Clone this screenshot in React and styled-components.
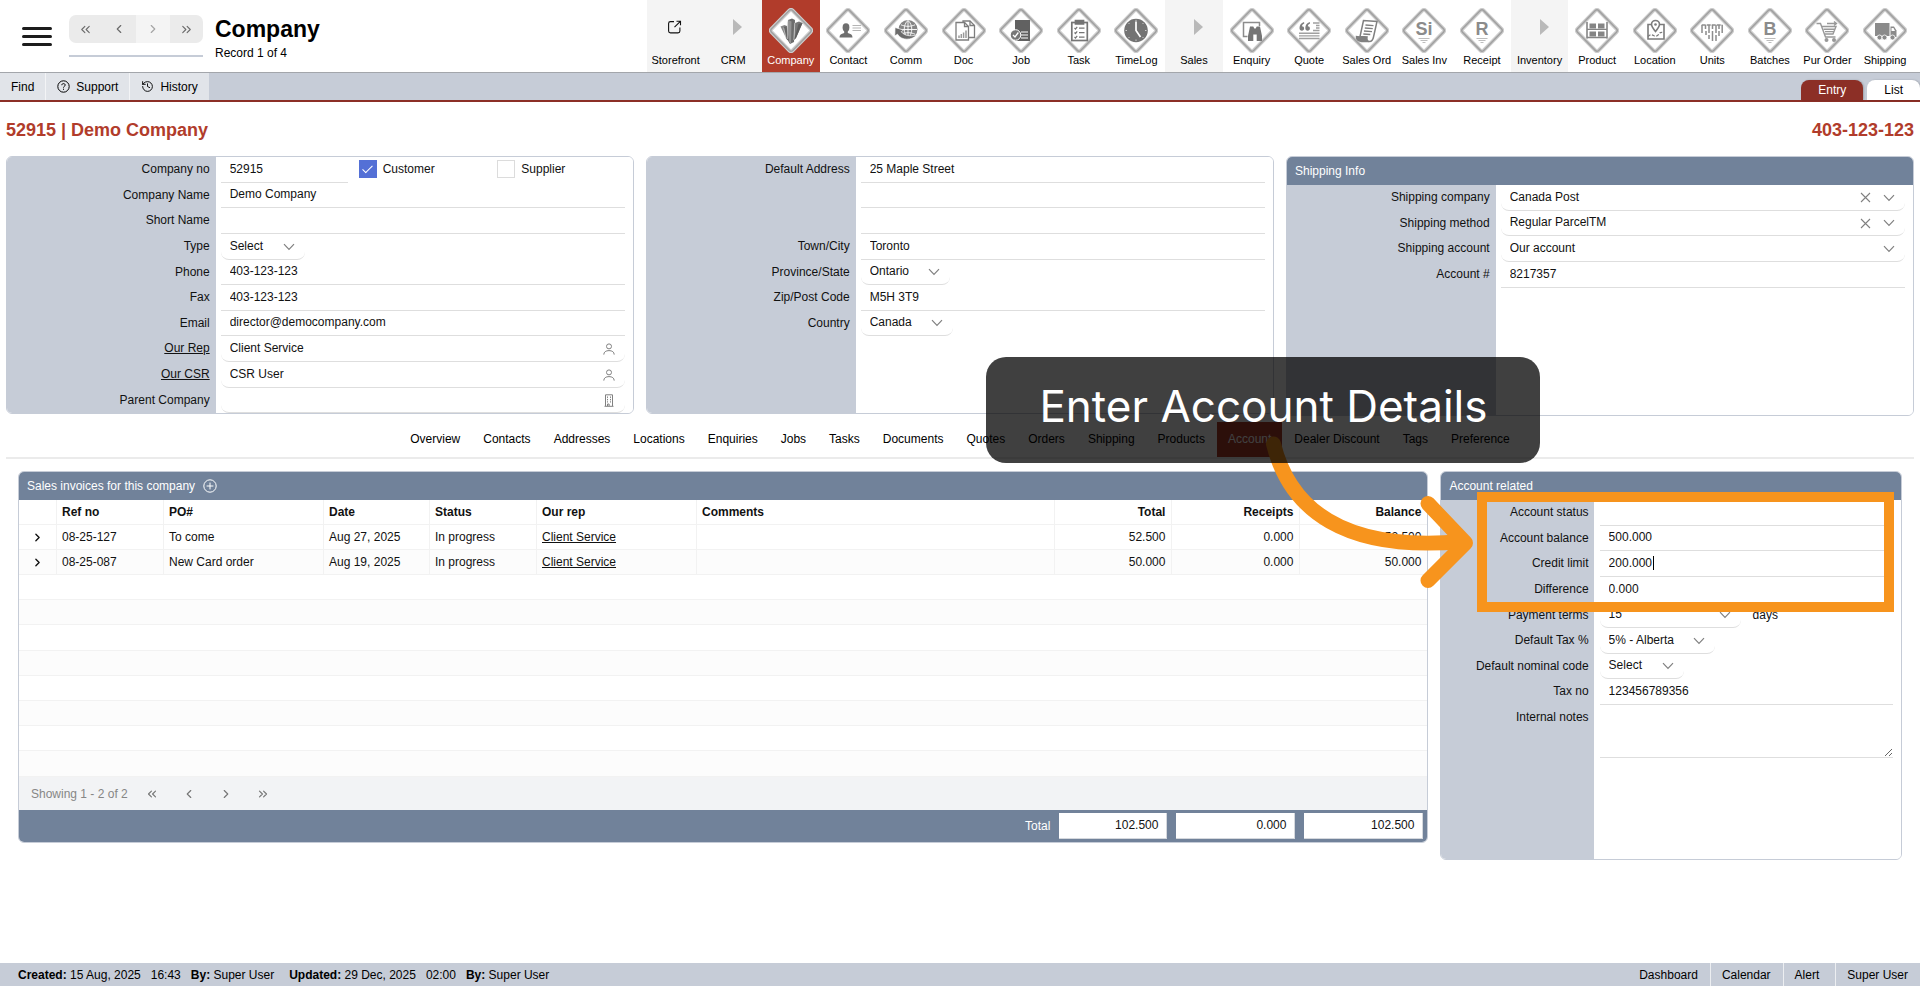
import React, { Fragment } from "react";
import styled, { createGlobalStyle, css } from "styled-components";
import { ChevronLeft, ChevronRight, ChevronsLeft, ChevronsRight, History } from "lucide-react";

const color = {
  mist: "#c6ccd7",
  slate: "#71829a",
  brick: "#b13c2b",
  brickDark: "#8c2f26",
  line: "#dedede",
  faint: "#f2f2f2",
  icon: "#808080",
  orange: "#f7941d",
};

const GlobalStyle = createGlobalStyle`
  *, *::before, *::after { box-sizing: border-box; }
  body { margin: 0; background: #fff; }
  body, button, input, select, textarea {
    font-family: "Liberation Sans", Arial, Helvetica, sans-serif;
    font-size: 12px;
    line-height: 16px;
    color: #111;
  }
  button { border: 0; padding: 0; background: none; cursor: pointer; }
  a { color: inherit; }
`;

const Page = styled.div`
  min-height: 100vh;
  display: flex;
  flex-direction: column;
`;

/* ---------- Header ---------- */

const Header = styled.header`
  display: flex;
  height: 73px;
  border-bottom: 1px solid #a3a6ab;
`;

const HeaderLeft = styled.div`
  flex: 1;
  min-width: 0;
  display: flex;
  align-items: flex-start;
  padding-left: 22px;
`;

const MenuButton = styled.button`
  display: grid;
  gap: 5px;
  width: 30px;
  margin-top: 27px;

  span {
    height: 3px;
    border-radius: 2px;
    background: #1c1c1c;
  }
`;

const RecordNav = styled.div`
  width: 134px;
  margin: 15px 0 0 17px;
  padding-bottom: 12px;
  border-bottom: 2px solid ${color.mist};
`;

const RecordButtons = styled.div`
  display: flex;
  border-radius: 7px;
  overflow: hidden;
`;

const RecordButton = styled.button`
  flex: 1;
  height: 28px;
  display: grid;
  place-items: center;
  background: ${(p) => (p.disabled ? "#f4f4f4" : "#ebebeb")};
  color: ${(p) => (p.disabled ? "#a5a5a5" : "#6b6b6b")};
`;

const TitleBlock = styled.div`
  margin: 15px 0 0 12px;
`;

const PageTitle = styled.h1`
  margin: 0;
  font-size: 23px;
  line-height: 28px;
  color: #000;
`;

const RecordCount = styled.p`
  margin: 2px 0 0;
  color: #000;
`;

const Modules = styled.nav`
  display: flex;
  width: 66%;
  margin-right: 6px;
`;

const ModuleLink = styled.a`
  flex: 1 1 0;
  min-width: 0;
  display: flex;
  flex-direction: column;
  align-items: center;
  padding-top: 8px;
  font-size: 11px;
  line-height: 14px;
  white-space: nowrap;
  text-decoration: none;
  color: ${(p) => (p.$active ? "#fff" : "#000")};
  background: ${(p) => (p.$active ? color.brick : p.$section ? "#f4f4f4" : "transparent")};

  svg {
    flex: none;
  }
`;

/* ---------- Action bar ---------- */

const ActionBar = styled.div`
  display: flex;
  justify-content: space-between;
  height: 29px;
  background: ${color.mist};
  border-bottom: 2px solid ${color.brickDark};
`;

const Actions = styled.div`
  display: flex;
`;

const ActionButton = styled.button`
  display: flex;
  align-items: center;
  gap: 6px;
  padding: 0 11px;
  background: #e1e4e9;
  color: #000;

  & + & {
    border-left: 1px solid #f3f4f6;
  }
`;

const ViewTabs = styled.div`
  display: flex;
  align-items: flex-end;
  gap: 4px;
`;

const ViewTab = styled.button`
  height: 20px;
  padding: 0 17px;
  border-radius: 8px 8px 0 0;
  background: ${(p) => (p.$active ? color.brickDark : "#fff")};
  color: ${(p) => (p.$active ? "#fff" : "#000")};
  box-shadow: 1px 0 2px rgba(0, 0, 0, 0.2);
`;

/* ---------- Content ---------- */

const Main = styled.main`
  flex: 1;
  padding: 0 6px 24px;
`;

const RecordHeading = styled.div`
  display: flex;
  justify-content: space-between;
  padding: 18px 0 16px;
  font-size: 18px;
  line-height: 20px;
  font-weight: bold;
  color: ${color.brick};

  h2 {
    margin: 0;
    font-size: inherit;
  }
`;

const PanelRow = styled.div`
  display: grid;
  grid-template-columns: repeat(3, minmax(0, 1fr));
  align-items: start;
  gap: 12px;
`;

const Panel = styled.section`
  display: flex;
  flex-direction: column;
  min-height: ${(p) => (p.$min ? `${p.$min}px` : "0")};
  border: 1px solid ${color.mist};
  border-radius: 6px;
  overflow: hidden;
`;

const PanelHeader = styled.h3`
  display: flex;
  align-items: center;
  gap: 8px;
  margin: 0;
  height: 28px;
  padding: 0 8px 1px;
  background: ${color.slate};
  color: #fff;
  font-size: 12px;
  font-weight: normal;
`;

const Form = styled.div`
  flex: 1;
  display: grid;
  grid-template-columns: minmax(0, 1fr) minmax(0, 2fr);
  grid-auto-rows: 26px 25px 26px 26px 25px;
  align-content: start;
  background: linear-gradient(to right, ${color.mist} 33.33%, #fff 33.33%);
`;

const FieldLabel = styled.label`
  align-self: start;
  padding: 4px 6px 0 0;
  text-align: right;
`;

const FieldCell = styled.div`
  display: flex;
  align-items: stretch;
  gap: 12px;
  padding: 0 8px 0 5px;
  ${(p) =>
    p.$rows &&
    css`
      grid-row: span ${p.$rows};
      align-items: flex-start;
    `}
`;

const underline = css`
  border: 0;
  border-bottom: 1px solid ${color.line};
  border-radius: 0;
  background: transparent;
  outline: 0;
`;

const TextInput = styled.input`
  ${underline}
  width: 100%;
  min-width: 0;
  padding: 0 9px 2px;
`;

const NotesInput = styled.textarea`
  ${underline}
  display: block;
  width: 100%;
  height: 53px;
  padding: 4px 9px;
  resize: vertical;
`;

const Stack = styled.div`
  display: grid;
  width: ${(p) => (p.$width ? `${p.$width}px` : "100%")};

  > * {
    grid-area: 1 / 1;
  }
`;

const Select = styled.select`
  ${underline}
  appearance: none;
  width: 100%;
  padding: 0 9px 2px;
  border-radius: 0 0 8px 8px;
`;

const LookupInput = styled(TextInput)`
  border-radius: 0 0 8px 8px;
`;

const Adornment = styled.div`
  justify-self: end;
  display: flex;
  align-items: center;
  gap: 12px;
  padding: 0 10px 1px 0;
  color: ${color.icon};
  pointer-events: none;

  svg {
    display: block;
  }
  button {
    pointer-events: auto;
    color: inherit;
  }
`;

const Caret = styled.span`
  justify-self: start;
  align-self: center;
  width: 1px;
  height: 14px;
  margin: 0 0 2px 53px;
  background: #000;
`;

const Unit = styled.span`
  padding-top: 4px;
`;

const CompanyNoCell = styled.div`
  display: grid;
  grid-template-columns: 127px 1fr 1fr;
  gap: 11px;
  padding: 0 8px 0 5px;
`;

const CheckLabel = styled.label`
  display: flex;
  align-items: center;
  gap: 6px;
  padding-bottom: 2px;
`;

const Checkbox = styled.input`
  appearance: none;
  display: grid;
  place-items: center;
  width: 18px;
  height: 18px;
  margin: 0;
  border: 1px solid #dcdcdc;

  &:checked {
    border-color: #5470d6;
    background: #5470d6;
  }
  &:checked::after {
    content: "";
    width: 5px;
    height: 10px;
    margin-bottom: 3px;
    border: solid #fff;
    border-width: 0 1px 1px 0;
    transform: rotate(45deg);
  }
`;

const SubTabs = styled.nav`
  display: flex;
  justify-content: center;
  gap: 1px;
  margin-top: 6px;
  border-bottom: 2px solid #ebebeb;
`;

const SubTab = styled.a`
  padding: 9px 11px 10px;
  text-decoration: none;
  color: ${(p) => (p.$active ? "#fff" : "#000")};
  background: ${(p) => (p.$active ? color.brick : "transparent")};
`;

const DetailRow = styled.div`
  display: grid;
  grid-template-columns: minmax(0, 1fr) 24.5%;
  align-items: start;
  gap: 12px;
  padding: 12px 12px 0;
`;

/* ---------- Invoice table ---------- */

const InvoiceTable = styled.table`
  width: 100%;
  table-layout: fixed;
  border-collapse: separate;
  border-spacing: 0;

  th,
  td {
    height: 25px;
    padding: 0 6px 0 5px;
    border-bottom: 1px solid ${color.faint};
    text-align: left;
    white-space: nowrap;
    line-height: 14px;
  }
  th + th,
  td + td {
    border-left: 1px solid ${color.faint};
  }
  tbody tr:nth-child(even) {
    background: #fcfcfc;
  }
  tbody tr:nth-child(5n) td {
    height: 26px;
  }
  .num {
    text-align: right;
  }
`;

const ExpandButton = styled.button`
  display: grid;
  margin: 0 auto;
  color: #111;
`;

const Pager = styled.div`
  display: flex;
  align-items: center;
  gap: 17px;
  height: 33px;
  padding: 0 12px;
  background: #f2f3f5;
  color: #868686;
`;

const PagerButtons = styled.div`
  display: flex;
  gap: 23px;

  button {
    display: grid;
    color: #777;
  }
`;

const TotalsBar = styled.div`
  display: flex;
  align-items: center;
  justify-content: flex-end;
  gap: 9px;
  height: 32px;
  padding-right: 4px;
  background: ${color.slate};
  color: #fff;
`;

const TotalBox = styled.output`
  width: ${(p) => p.$width}px;
  height: 26px;
  padding: 4px 8px;
  background: #fff;
  color: #111;
  text-align: right;
  border: solid #d5d8dd;
  border-width: 0 1px 1px 0;
`;

/* ---------- Walkthrough annotations ---------- */

const Annotated = styled.div`
  position: relative;
`;

const Highlight = styled.div`
  position: absolute;
  z-index: 1;
  top: 21px;
  left: 37px;
  right: 8px;
  height: 120px;
  border: 10px solid ${color.orange};
  pointer-events: none;
`;

const Arrow = styled.svg`
  position: absolute;
  z-index: 1;
  top: -41px;
  left: -180px;
  pointer-events: none;
`;

const Callout = styled.div`
  position: absolute;
  z-index: 2;
  top: -114px;
  left: -454px;
  width: 554px;
  height: 106px;
  padding-bottom: 8px;
  display: grid;
  place-items: center;
  border-radius: 20px;
  background: rgba(0, 0, 0, 0.75);
  color: #fff;
  font-family: Inter, "Liberation Sans", sans-serif;
  font-size: 44px;
  line-height: 54px;
  white-space: nowrap;
  pointer-events: none;
`;

/* ---------- Footer ---------- */

const Footer = styled.footer`
  display: flex;
  justify-content: space-between;
  height: 23px;
  line-height: 24px;
  padding-left: 18px;
  background: ${color.mist};
  color: #000;
`;

const AuditTrail = styled.div`
  display: flex;
  gap: 10px;

  span:nth-child(4) {
    margin-left: 5px;
  }
`;

const FooterLinks = styled.nav`
  display: flex;

  a {
    padding: 0 12px 0 11px;
    text-decoration: none;
  }
  a:nth-child(3) {
    padding-right: 16px;
  }
  a + a {
    border-left: 1px solid #eceef1;
  }
`;

/* ---------- Small icons ---------- */

const DownIcon = () => (
  <svg width="12" height="8" viewBox="0 0 12 8" fill="none" stroke="currentColor" strokeWidth="1.2">
    <path d="M1 1.2l5 5.2 5-5.2" />
  </svg>
);

const ClearIcon = () => (
  <svg width="11" height="11" viewBox="0 0 11 11" fill="none" stroke="currentColor" strokeWidth="1.1">
    <path d="M1 1l9 9M10 1l-9 9" />
  </svg>
);

const PersonIcon = () => (
  <svg width="12" height="12" viewBox="0 0 12 12" fill="none" stroke="currentColor" strokeWidth="1">
    <circle cx="6" cy="3.4" r="2.5" />
    <path d="M0.8 11.6c0-2.6 2-4 5.2-4s5.2 1.4 5.2 4" />
  </svg>
);

const BuildingIcon = () => (
  <svg width="12" height="13" viewBox="0 0 12 13" fill="none" stroke="currentColor" strokeWidth="1">
    <path d="M2.500 12V.8h7V12M1.500 12.300h9" />
    <path d="M4.500 2.500v6M7.500 2.500v6" strokeDasharray="1.4 1" />
    <path d="M4.500 12v-2h1.600v2" />
  </svg>
);

const PlusCircleIcon = () => (
  <svg width="14" height="14" viewBox="0 0 14 14" fill="none" stroke="#fff" strokeWidth="1">
    <circle cx="7" cy="7" r="6.2" />
    <path d="M7 3.6v6.8M3.6 7h6.8" />
  </svg>
);

const HelpIcon = () => (
  <svg width="13" height="13" viewBox="0 0 13 13" fill="none" stroke="currentColor" strokeWidth="1">
    <circle cx="6.5" cy="6.5" r="5.7" />
    <path d="M4.8 5.2c0-1 .7-1.600 1.700-1.600s1.700.6 1.700 1.500c0 1.200-1.700 1.200-1.700 2.500" />
    <path d="M6.500 8.700v1.100" />
  </svg>
);

/* ---------- Module glyphs, drawn inside a 44 x 45 diamond ---------- */

const glyphText = {
  fontFamily: "Liberation Sans, Arial, sans-serif",
  fontWeight: "bold",
  textAnchor: "middle",
  fill: "#8b8b8b",
};

const StackLines = () => (
  <path d="M16.5 30.5h11M18.5 32.5h7M20.5 34.5h3" stroke="#bdbdbd" strokeWidth="1.2" />
);

const glyphs = {
  company: (
    <g>
      <path d="M19 12l4-1.500 3 1.500-1 22-4 2-3-5z" fill="#6c6c6c" />
      <path d="M19 12l3.500 1.500L22 36l-4-5z" fill="#939393" />
      <path d="M11.500 18.500l4-1.500 2.500 1 2 15-2.500-2z" fill="#898989" />
      <path d="M14.500 19l3-1 2.500 15-2.500-2z" fill="#666" />
      <path d="M26 15l4-1.500 3.500 1.500-6.500 15-2 2z" fill="#777" />
      <path d="M29.500 16l4-1-6.500 15-2 2z" fill="#5d5d5d" />
      <path d="M18.600 14v17M25.800 15l-1 17M14.600 19.500l2.500 11" stroke="#ddd" strokeWidth=".6" />
    </g>
  ),
  contact: (
    <g fill="#6f6f6f">
      <ellipse cx="20" cy="19.500" rx="3.400" ry="4.200" />
      <path d="M13.500 29.500c0-3 1.500-3.800 4.700-4.600v-2h3.600v2c3.200.8 4.700 1.600 4.700 4.600z" />
      <path d="M26.500 17.500H35M26.500 20h8.500M26.500 22.500H35" stroke="#b5b5b5" />
    </g>
  ),
  comm: (
    <g>
      <circle cx="24" cy="21.500" r="9.500" fill="#858585" />
      <path
        d="M24 12.500v17M15 21.500h18M17 16.800c4 2 10 2 14 0M17 26.200c4-2 10-2 14 0M24 12.500c-5 4-5 13 0 18M24 12.500c5 4 5 13 0 18"
        fill="none"
        stroke="#fff"
        strokeWidth=".9"
      />
      <path d="M11 19.500l8.500 2.500-2.300 1.700c3 4 9 5 15.300 3.300-4.500 5.500-15 6-19-.8L10.800 28z" fill="#6b6b6b" stroke="#fff" strokeWidth=".7" />
    </g>
  ),
  doc: (
    <g fill="#fff" stroke="#7d7d7d" strokeWidth="1.300">
      <path d="M21 13h7l4.500 4.500V29.500H21z" />
      <path d="M14 14.500h8.500l4 4v13.500H14z" />
      <path d="M22.500 14.500v4h4M28 13v4.500h4.500" fill="none" />
      <path d="M17 30v-2.500M19.300 30v-4M21.600 30v-5.500M24 30v-7.500" stroke="#999" strokeWidth="1.500" />
    </g>
  ),
  job: (
    <g>
      <path d="M16 12h15v21H16z" fill="#616161" />
      <path d="M22 24h7M22 27h7M22 30h7" stroke="#fff" strokeWidth="1.200" />
      <circle cx="16.500" cy="27" r="5.300" fill="#777" stroke="#fff" />
      <path d="M14 27l2 2 3.300-4.500" fill="none" stroke="#fff" strokeWidth="1.300" />
    </g>
  ),
  task: (
    <g fill="none" stroke="#757575" strokeWidth="1.700">
      <rect x="14.800" y="14.500" width="15.500" height="18" />
      <path d="M18.500 12.500h8v3.300h-8z" fill="#757575" />
      <path d="M17.500 20l1 1 1.700-2.200M17.500 24.500l1 1 1.700-2.200M17.500 29l1 1 1.700-2.200M22 20.200h5.500M22 24.700h5.500M22 29.200h5.500" strokeWidth="1.200" />
    </g>
  ),
  timelog: (
    <g>
      <circle cx="22" cy="22.500" r="11.800" fill="#737373" />
      <path d="M22 13.500v9l4.500 6.500" fill="none" stroke="#fff" strokeWidth="1.700" />
      <path d="M22 11.800v1.500M22 31.500V33M11.500 22.500H13M31 22.500h1.500M14.500 15l1 1M28.500 29l1 1M29.500 15l-1 1M15.500 29l-1 1" stroke="#ccc" />
    </g>
  ),
  enquiry: (
    <g>
      <path d="M17.500 28.500h-4V14.500h16V18" fill="none" stroke="#8c8c8c" strokeWidth="1.500" />
      <path d="M20 18.500h3.300l1 2h1.400l1-2H30l2 9.500v5h-5.300v-6.500h-3.400V33H18v-5z" fill="#757575" />
    </g>
  ),
  quote: (
    <g fill="#7d7d7d">
      <path d="M17 14c-3 1-4.500 3.200-4.500 6 0 1.800 1 2.700 2.400 2.700 1.300 0 2.200-.9 2.200-2.200S16.300 18.300 15 18.300c.2-1.400 1-2.200 2.300-2.800zM22.800 14c-3 1-4.500 3.200-4.500 6 0 1.800 1 2.700 2.400 2.700 1.300 0 2.200-.9 2.200-2.200s-.8-2.200-2.100-2.200c.2-1.400 1-2.200 2.300-2.800z" />
      <path d="M26 15h6.500M29 17.500h3.500M29 20h3.500M26 22.500h6.500M12 25.300h20.500M12 27.900h20.500M12 30.500h20.500" stroke="#a0a0a0" strokeWidth="1.400" />
    </g>
  ),
  order: (
    <g fill="none" stroke="#808080" strokeWidth="1.500">
      <path d="M15 29l-3.500-.4c0 3 1.600 4.600 5 4.800l7.500.2c-2.300-1-2.500-2.700-2-4.600z" fill="#808080" />
      <path d="M18.500 12.500l-3.500 16 7 .5c-.5 3 .5 4.500 2.500 4.500 2.500 0 3.500-2 4-4.500l3.500-15.500z" fill="#fff" />
      <path d="M20.500 17l8 .6M19.800 20l8 .6M19 23l8 .6M18.300 26l7 .5" strokeWidth="1.300" />
    </g>
  ),
  si: (
    <g>
      <text x="22" y="27" fontSize="18" {...glyphText}>Si</text>
      <StackLines />
    </g>
  ),
  receipt: (
    <g>
      <text x="22" y="27" fontSize="18" {...glyphText}>R</text>
      <StackLines />
    </g>
  ),
  batches: (
    <g>
      <text x="22" y="27" fontSize="18" {...glyphText}>B</text>
      <StackLines />
    </g>
  ),
  product: (
    <g fill="#858585">
      <path d="M12 14v16.500M32 14v16.500" stroke="#858585" strokeWidth="1.600" />
      <path d="M12 21.300h20M12 29.500h20" stroke="#858585" strokeWidth="1.300" />
      <path d="M14.500 15.500h6.500v5h-6.500zM23 15.500h6.500v5H23zM14.500 23.500h6.500v5h-6.500zM23 23.500h6.500v5H23z" />
    </g>
  ),
  location: (
    <g fill="none" stroke="#7b7b7b" strokeWidth="1.600">
      <path d="M18 16.500h-3v14.500h16V16.500h-4" />
      <path d="M22.500 23.500c-2.700-3.300-4-5.200-4-7a4 4 0 0 1 8 0c0 1.800-1.300 3.700-4 7z" />
      <circle cx="22.500" cy="16.500" r="1.300" fill="#7b7b7b" stroke="none" />
      <path d="M15 28.500c2-2.500 4-2 5.500-1s4 1 5-1 2.500-2.500 5-2" strokeDasharray="3 1.500" strokeWidth="1.300" />
    </g>
  ),
  units: (
    <g stroke="#8c8c8c" strokeWidth="1.500">
      <path d="M11.700 17h20.600" strokeDasharray="4 1" />
      <path d="M12 17v8M15.500 17v4M19 17v8M22.500 17v4M26 17v8M29 17v4M32.200 17v8M16 23v4M19 27v4M22.500 23v10M26 27v6M29 23v5" />
    </g>
  ),
  cart: (
    <g fill="none" stroke="#999" strokeWidth="1.400">
      <path d="M11.500 15.500h4l5 13.500h10" />
      <path d="M17 18.500h14l-3 7.500H20M18.500 21.200h11.500M20 23.600h9" />
      <path d="M22 15.500h9M29 13.500l2.500 2-2.500 2" />
      <circle cx="21.500" cy="32" r="1.300" fill="#999" />
      <circle cx="29" cy="32" r="1.300" fill="#999" />
    </g>
  ),
  truck: (
    <g fill="#8b8b8b">
      <path d="M12 15h14.500v13H12z" />
      <path d="M27.500 18.500h3.500l2.500 4V29h-6z" />
      <path d="M28.500 20h2l1.500 3h-3.500z" fill="#fff" />
      <circle cx="16.500" cy="29.500" r="2.500" stroke="#fff" strokeWidth=".8" />
      <circle cx="21.500" cy="29.500" r="2.500" stroke="#fff" strokeWidth=".8" />
      <circle cx="29.500" cy="29.500" r="2.500" stroke="#fff" strokeWidth=".8" />
    </g>
  ),
};

const DIAMOND = "M20.300 2.600q1.700-1.700 3.400 0L41.500 20.800q1.500 1.700 0 3.400L23.700 42.400q-1.700 1.700-3.400 0L2.500 24.200q-1.500-1.700 0-3.400z";

const ModuleIcon = ({ kind }) => {
  if (kind === "external") {
    return (
      <svg width="44" height="45" viewBox="0 0 44 45" fill="none" stroke="#111" strokeWidth="1.100">
        <path d="M20 13.600h-3.500q-1.900 0-1.900 1.900v7.500q0 1.900 1.900 1.900h7.500q1.900 0 1.900-1.900V19.500" />
        <path d="M20.500 19.200l5.600-5.600M22.500 13.200h4v4" />
      </svg>
    );
  }
  if (kind === "section") {
    return (
      <svg width="44" height="45" viewBox="0 0 44 45">
        <path d="M22 11l9 8-9 8z" fill="#b9b9b9" />
      </svg>
    );
  }
  return (
    <svg width="44" height="45" viewBox="0 0 44 45">
      <path d={DIAMOND} fill="#fff" stroke="#cdcdcd" strokeWidth="3.800" />
      <path d={DIAMOND} fill="none" stroke="#a0a0a0" strokeWidth="1.500" />
      {glyphs[kind]}
    </svg>
  );
};

/* ---------- Data ---------- */

const modules = [
  ["Storefront", "external"],
  ["CRM", "section"],
  ["Company", "company"],
  ["Contact", "contact"],
  ["Comm", "comm"],
  ["Doc", "doc"],
  ["Job", "job"],
  ["Task", "task"],
  ["TimeLog", "timelog"],
  ["Sales", "section"],
  ["Enquiry", "enquiry"],
  ["Quote", "quote"],
  ["Sales Ord", "order"],
  ["Sales Inv", "si"],
  ["Receipt", "receipt"],
  ["Inventory", "section"],
  ["Product", "product"],
  ["Location", "location"],
  ["Units", "units"],
  ["Batches", "batches"],
  ["Pur Order", "cart"],
  ["Shipping", "truck"],
];

const subTabs = [
  "Overview", "Contacts", "Addresses", "Locations", "Enquiries", "Jobs", "Tasks", "Documents",
  "Quotes", "Orders", "Shipping", "Products", "Account", "Dealer Discount", "Tags", "Preference",
];

const addressFields = [
  { id: "address1", label: "Default Address", value: "25 Maple Street" },
  { id: "address2", hiddenLabel: "Address line 2", value: "" },
  { id: "address3", hiddenLabel: "Address line 3", value: "" },
  { id: "town", label: "Town/City", value: "Toronto" },
  { id: "province", label: "Province/State", value: "Ontario", kind: "select", width: 89 },
  { id: "zip", label: "Zip/Post Code", value: "M5H 3T9" },
  { id: "country", label: "Country", value: "Canada", kind: "select", width: 92 },
];

const companyFields = [
  { id: "name", label: "Company Name", value: "Demo Company" },
  { id: "short", label: "Short Name", value: "" },
  { id: "type", label: "Type", value: "Select", kind: "select", width: 84 },
  { id: "phone", label: "Phone", value: "403-123-123" },
  { id: "fax", label: "Fax", value: "403-123-123" },
  { id: "email", label: "Email", value: "director@democompany.com" },
  { id: "rep", label: "Our Rep", value: "Client Service", kind: "lookup", icon: <PersonIcon />, link: true },
  { id: "csr", label: "Our CSR", value: "CSR User", kind: "lookup", icon: <PersonIcon />, link: true },
  { id: "parent", label: "Parent Company", value: "", kind: "lookup", icon: <BuildingIcon /> },
];

const shippingFields = [
  { id: "ship-company", label: "Shipping company", value: "Canada Post", kind: "select", clearable: true },
  { id: "ship-method", label: "Shipping method", value: "Regular ParcelTM", kind: "select", clearable: true },
  { id: "ship-account", label: "Shipping account", value: "Our account", kind: "select" },
  { id: "account-no", label: "Account #", value: "8217357" },
];

const accountFields = [
  { id: "acc-status", label: "Account status", value: "" },
  { id: "acc-balance", label: "Account balance", value: "500.000" },
  { id: "credit", label: "Credit limit", value: "200.000", kind: "editing" },
  { id: "difference", label: "Difference", value: "0.000" },
  { id: "terms", label: "Payment terms", value: "15", kind: "select", width: 141, unit: "days" },
  { id: "tax", label: "Default Tax %", value: "5% - Alberta", kind: "select", width: 115 },
  { id: "nominal", label: "Default nominal code", value: "Select", kind: "select", width: 84 },
  { id: "tax-no", label: "Tax no", value: "123456789356" },
  { id: "notes", label: "Internal notes", value: "", kind: "notes" },
];

const invoices = [
  ["08-25-127", "To come", "Aug 27, 2025", "In progress", "Client Service", "", "52.500", "0.000", "52.500"],
  ["08-25-087", "New Card order", "Aug 19, 2025", "In progress", "Client Service", "", "50.000", "0.000", "50.000"],
];

const columns = [
  ["", 37],
  ["Ref no", 107],
  ["PO#", 160],
  ["Date", 106],
  ["Status", 107],
  ["Our rep", 160],
  ["Comments", null],
  ["Total", 117],
  ["Receipts", 128],
  ["Balance", 128],
];

/* ---------- Fields ---------- */

function Control({ field }) {
  const { id, value, kind } = field;
  if (kind === "select") {
    return (
      <>
        <Stack $width={field.width}>
          <Select id={id} defaultValue={value}>
            <option>{value}</option>
          </Select>
          <Adornment>
            {field.clearable && (
              <button type="button" aria-label={`Clear ${field.label}`}>
                <ClearIcon />
              </button>
            )}
            <DownIcon />
          </Adornment>
        </Stack>
        {field.unit && <Unit>{field.unit}</Unit>}
      </>
    );
  }
  if (kind === "lookup") {
    return (
      <Stack>
        <LookupInput id={id} defaultValue={value} />
        <Adornment>{field.icon}</Adornment>
      </Stack>
    );
  }
  if (kind === "editing") {
    return (
      <Stack>
        <TextInput id={id} defaultValue={value} />
        <Caret />
      </Stack>
    );
  }
  if (kind === "notes") return <NotesInput id={id} defaultValue={value} />;
  return <TextInput id={id} defaultValue={value} aria-label={field.hiddenLabel} />;
}

const Fields = ({ items }) =>
  items.map((field) => (
    <Fragment key={field.id}>
      <FieldLabel htmlFor={field.id}>
        {field.link ? <a href="#">{field.label}</a> : field.label}
      </FieldLabel>
      <FieldCell $rows={field.kind === "notes" ? 3 : undefined}>
        <Control field={field} />
      </FieldCell>
    </Fragment>
  ));

/* ---------- Page ---------- */

export default function App() {
  return (
    <Page>
      <GlobalStyle />
      <Header>
        <HeaderLeft>
          <MenuButton type="button" aria-label="Menu">
            <span />
            <span />
            <span />
          </MenuButton>
          <RecordNav>
            <RecordButtons>
              <RecordButton type="button" aria-label="First record"><ChevronsLeft size={15} strokeWidth={1.8} /></RecordButton>
              <RecordButton type="button" aria-label="Previous record"><ChevronLeft size={14} strokeWidth={2} /></RecordButton>
              <RecordButton type="button" aria-label="Next record" disabled><ChevronRight size={14} strokeWidth={2} /></RecordButton>
              <RecordButton type="button" aria-label="Last record"><ChevronsRight size={15} strokeWidth={1.8} /></RecordButton>
            </RecordButtons>
          </RecordNav>
          <TitleBlock>
            <PageTitle>Company</PageTitle>
            <RecordCount>Record 1 of 4</RecordCount>
          </TitleBlock>
        </HeaderLeft>
        <Modules>
          {modules.map(([label, kind]) => (
            <ModuleLink
              key={label}
              href="#"
              $active={kind === "company"}
              $section={kind === "section" || kind === "external"}
            >
              <ModuleIcon kind={kind} />
              {label}
            </ModuleLink>
          ))}
        </Modules>
      </Header>

      <ActionBar>
        <Actions>
          <ActionButton type="button">Find</ActionButton>
          <ActionButton type="button"><HelpIcon />Support</ActionButton>
          <ActionButton type="button"><History size={13} strokeWidth={1.7} />History</ActionButton>
        </Actions>
        <ViewTabs>
          <ViewTab type="button" $active>Entry</ViewTab>
          <ViewTab type="button">List</ViewTab>
        </ViewTabs>
      </ActionBar>

      <Main>
        <RecordHeading>
          <h2>52915 | Demo Company</h2>
          <span>403-123-123</span>
        </RecordHeading>

        <PanelRow>
          <Panel $min={258}>
            <Form>
              <FieldLabel htmlFor="company-no">Company no</FieldLabel>
              <CompanyNoCell>
                <TextInput id="company-no" defaultValue="52915" />
                <CheckLabel>
                  <Checkbox type="checkbox" defaultChecked />
                  Customer
                </CheckLabel>
                <CheckLabel>
                  <Checkbox type="checkbox" />
                  Supplier
                </CheckLabel>
              </CompanyNoCell>
              <Fields items={companyFields} />
            </Form>
          </Panel>
          <Panel $min={258}>
            <Form>
              <Fields items={addressFields} />
            </Form>
          </Panel>
          <Panel $min={260}>
            <PanelHeader>Shipping Info</PanelHeader>
            <Form>
              <Fields items={shippingFields} />
            </Form>
          </Panel>
        </PanelRow>

        <SubTabs>
          {subTabs.map((tab) => (
            <SubTab key={tab} href="#" $active={tab === "Account"}>
              {tab}
            </SubTab>
          ))}
        </SubTabs>

        <DetailRow>
          <Panel>
            <PanelHeader>
              Sales invoices for this company
              <PlusCircleIcon />
            </PanelHeader>
            <InvoiceTable>
              <colgroup>
                {columns.map(([name, width]) => (
                  <col key={name} width={width ?? undefined} />
                ))}
              </colgroup>
              <thead>
                <tr>
                  {columns.map(([name], i) => (
                    <th key={name} className={i > 6 ? "num" : undefined}>{name}</th>
                  ))}
                </tr>
              </thead>
              <tbody>
                {invoices.map((row) => (
                  <tr key={row[0]}>
                    <td>
                      <ExpandButton type="button" aria-label={`Expand ${row[0]}`}>
                        <ChevronRight size={13} strokeWidth={2.5} />
                      </ExpandButton>
                    </td>
                    {row.map((cell, i) => (
                      <td key={i} className={i > 5 ? "num" : undefined}>
                        {i === 4 ? <a href="#">{cell}</a> : cell}
                      </td>
                    ))}
                  </tr>
                ))}
                {Array.from({ length: 8 }, (_, i) => (
                  <tr key={i}>
                    <td colSpan={columns.length} />
                  </tr>
                ))}
              </tbody>
            </InvoiceTable>
            <Pager>
              <span>Showing 1 - 2 of 2</span>
              <PagerButtons>
                <button type="button" aria-label="First page"><ChevronsLeft size={14} strokeWidth={2} /></button>
                <button type="button" aria-label="Previous page"><ChevronLeft size={14} strokeWidth={2} /></button>
                <button type="button" aria-label="Next page"><ChevronRight size={14} strokeWidth={2} /></button>
                <button type="button" aria-label="Last page"><ChevronsRight size={14} strokeWidth={2} /></button>
              </PagerButtons>
            </Pager>
            <TotalsBar>
              Total
              <TotalBox $width={108}>102.500</TotalBox>
              <TotalBox $width={119}>0.000</TotalBox>
              <TotalBox $width={119}>102.500</TotalBox>
            </TotalsBar>
          </Panel>

          <Annotated>
            <Panel $min={389}>
              <PanelHeader>Account related</PanelHeader>
              <Form>
                <Fields items={accountFields} />
              </Form>
            </Panel>
            <Highlight />
            <Arrow
              width="220"
              height="170"
              viewBox="1260 430 220 170"
              fill="none"
              stroke={color.orange}
              strokeWidth="15"
              strokeLinecap="round"
              strokeLinejoin="round"
            >
              <path d="M1273.500 444C1290 510 1345 552 1462 541.500" />
              <path d="M1428 503.500L1465.500 543L1428 580.500" />
            </Arrow>
            <Callout>Enter Account Details</Callout>
          </Annotated>
        </DetailRow>
      </Main>

      <Footer>
        <AuditTrail>
          <span><b>Created:</b> 15 Aug, 2025</span>
          <span>16:43</span>
          <span><b>By:</b> Super User</span>
          <span><b>Updated:</b> 29 Dec, 2025</span>
          <span>02:00</span>
          <span><b>By:</b> Super User</span>
        </AuditTrail>
        <FooterLinks>
          <a href="#">Dashboard</a>
          <a href="#">Calendar</a>
          <a href="#">Alert</a>
          <a href="#">Super User</a>
        </FooterLinks>
      </Footer>
    </Page>
  );
}
